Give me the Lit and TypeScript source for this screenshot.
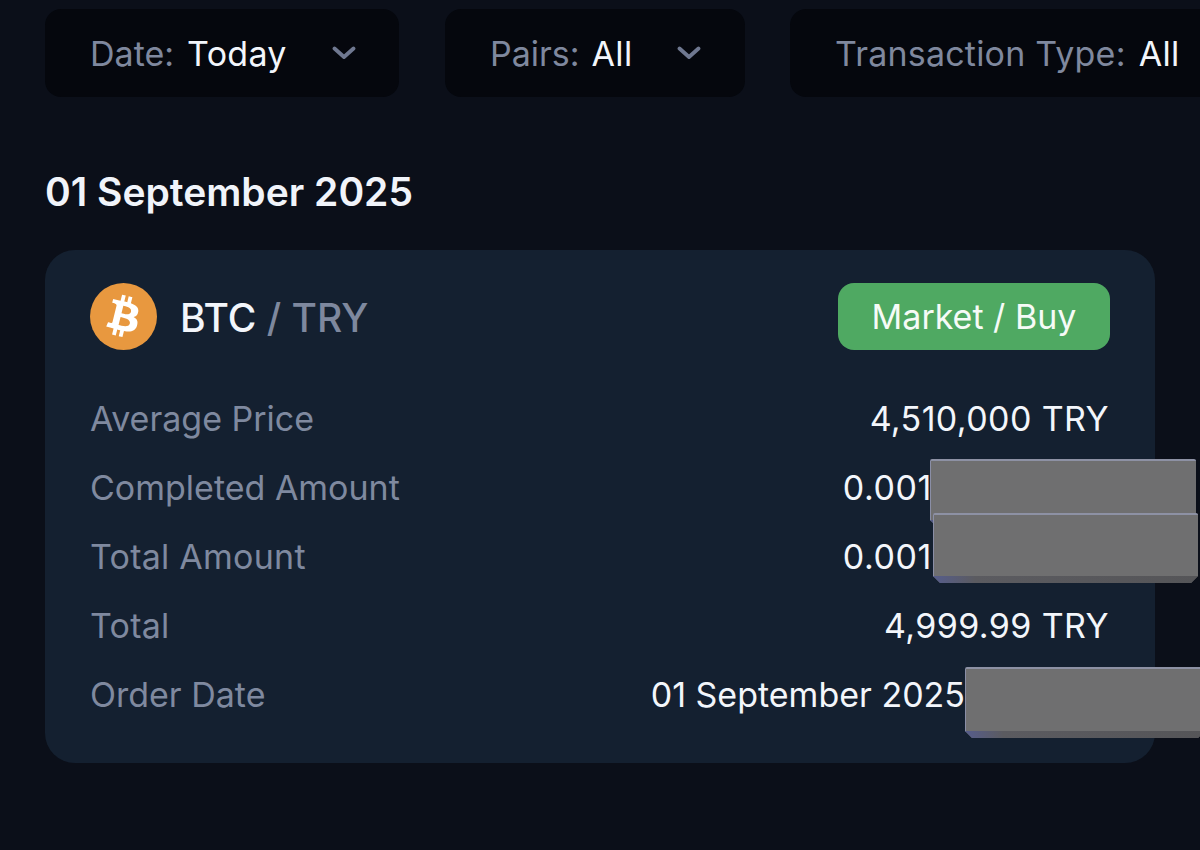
import { LitElement, html, css } from "lit";
import { customElement } from "lit/decorators.js";

const chevron = html`<svg class="chev" viewBox="0 0 24 14" aria-hidden="true"><path d="M2.5 2.5 12 11l9.5-8.5" fill="none" stroke="currentColor" stroke-width="3.8" stroke-linecap="round" stroke-linejoin="round"/></svg>`;

const btc = html`<svg class="coin" viewBox="0 0 24 24" aria-hidden="true"><circle cx="12" cy="12" r="12" fill="#e8983f"/><path fill="#fff" d="M17.288 10.291c.24-1.59-.974-2.45-2.64-3.03l.54-2.153-1.315-.33-.525 2.107c-.345-.087-.705-.167-1.064-.25l.526-2.127-1.32-.33-.54 2.165c-.285-.067-.565-.132-.84-.2l-1.815-.45-.35 1.407s.975.225.955.236c.535.136.63.486.615.766l-1.477 5.92c-.075.166-.24.406-.614.314.015.02-.96-.24-.96-.24l-.66 1.51 1.71.426.93.242-.54 2.19 1.32.327.54-2.17c.36.1.705.19 1.05.273l-.51 2.154 1.32.33.545-2.19c2.24.427 3.93.257 4.64-1.774.57-1.637-.03-2.58-1.217-3.196.854-.193 1.5-.76 1.68-1.93h.01zm-3.01 4.22c-.404 1.64-3.157.75-4.05.53l.72-2.9c.896.23 3.757.67 3.33 2.37zm.41-4.24c-.37 1.49-2.662.735-3.405.55l.654-2.64c.744.18 3.137.524 2.75 2.084v.006z"/></svg>`;

@customElement("app-root")
export class AppRoot extends LitElement {
  static styles = css`
    :host {
      display: block;
      width: 1200px;
      height: 850px;
      overflow: hidden;
      position: relative;
      background: #0b0f19;
      color: #f3f6fb;
      font-family: Inter, "Liberation Sans", sans-serif;
    }
    .page { padding: 9px 0 0 45px; }
    .filters { display: flex; gap: 45px; width: 1300px; }
    .filter {
      display: flex;
      align-items: center;
      height: 88px;
      box-sizing: border-box;
      padding-left: 45px;
      background: #05070d;
      border-radius: 16px;
      font-size: 34px;
      flex: none;
    }
    .f1 { width: 354px; }
    .f2 { width: 300px; margin-left: 1px; }
    .f3 { width: 500px; }
    .filter .k { color: #7f889e; margin-right: 13px; }
    .f2 .k { margin-right: 12px; }
    .f3 .k { letter-spacing: 0.2px; }
    .filter .v { color: #f3f6fb; letter-spacing: 0.3px; }
    .chev { width: 24px; height: 14px; color: #6f7890; flex: none; }
    .f1 .chev { margin-left: 45px; }
    .f2 .chev { margin-left: 45px; }
    h1 {
      margin: 73px 0 36px;
      font-size: 39px;
      line-height: 44px;
      font-weight: 600;
      color: #f1f4fa;
    }
    .card {
      position: relative;
      width: 1110px;
      height: 513px;
      box-sizing: border-box;
      padding: 33px 45px;
      background: #142030;
      border-radius: 30px;
    }
    .head { display: flex; align-items: center; justify-content: space-between; height: 67px; margin-bottom: 34px; }
    .pair { display: flex; align-items: center; gap: 23px; font-size: 39px; font-weight: 500; }
    .pair-text { padding-top: 2px; }
    .coin { width: 67px; height: 67px; display: block; }
    .pair .q { color: #7e889e; }
    .pair .b { color: #f3f6fb; }
    .badge {
      width: 272px;
      height: 67px;
      display: flex;
      align-items: center;
      justify-content: center;
      background: #4fa962;
      border-radius: 16px;
      font-size: 34px;
      color: #f6fbf7;
    }
    .row { display: flex; justify-content: space-between; align-items: center; height: 69px; font-size: 34px; }
    .row .k { color: #7f899f; }
    .row .wide { letter-spacing: 0.25px; }
    .row .v { color: #f3f6fb; }
    .row .num { letter-spacing: 0.4px; margin-right: 1px; }
    .m1 { margin-right: 178px; letter-spacing: 0.6px; }
    .m2 { margin-right: 145px; }
    .mask {
      position: absolute;
      box-sizing: border-box;
      background: #6f6f70;
      border-top: 2px solid #8d91a4;
      border-left: 1px solid #8a8ea6;
      border-radius: 2px 2px 0 0;
      clip-path: polygon(0 0, 100% 0, 100% calc(100% - 7px), calc(100% - 7px) 100%, 7px 100%, 0 calc(100% - 7px));
    }
    .mask::after {
      content: "";
      position: absolute;
      left: -1px;
      right: 0;
      bottom: 0;
      height: 7px;
      background: linear-gradient(90deg, #565d8c, #5b5b60 16%, #555558);
    }
    .a { left: 885px; top: 209px; width: 266px; height: 68px; z-index: 1; }
    .b2 { left: 888px; top: 263px; width: 265px; height: 70px; z-index: 2; }
    .c { left: 920px; top: 417px; width: 240px; height: 71px; z-index: 1; }
  `;

  render() {
    return html`
      <div class="page">
        <div class="filters">
          <div class="filter f1"><span class="k">Date:</span><span class="v">Today</span>${chevron}</div>
          <div class="filter f2"><span class="k">Pairs:</span><span class="v">All</span>${chevron}</div>
          <div class="filter f3"><span class="k">Transaction Type:</span><span class="v">All</span></div>
        </div>
        <h1>01 September 2025</h1>
        <section class="card">
          <div class="head">
            <div class="pair">${btc}<span class="pair-text"><span class="b">BTC</span> <span class="q">/ TRY</span></span></div>
            <div class="badge">Market / Buy</div>
          </div>
          <div class="row"><span class="k">Average Price</span><span class="v num">4,510,000 TRY</span></div>
          <div class="row"><span class="k">Completed Amount</span><span class="v m1">0.001</span></div>
          <div class="row"><span class="k wide">Total Amount</span><span class="v m1">0.001</span></div>
          <div class="row"><span class="k wide">Total</span><span class="v num">4,999.99 TRY</span></div>
          <div class="row"><span class="k">Order Date</span><span class="v m2">01 September 2025</span></div>
          <div class="mask a"></div>
          <div class="mask b2"></div>
          <div class="mask c"></div>
        </section>
      </div>
    `;
  }
}
